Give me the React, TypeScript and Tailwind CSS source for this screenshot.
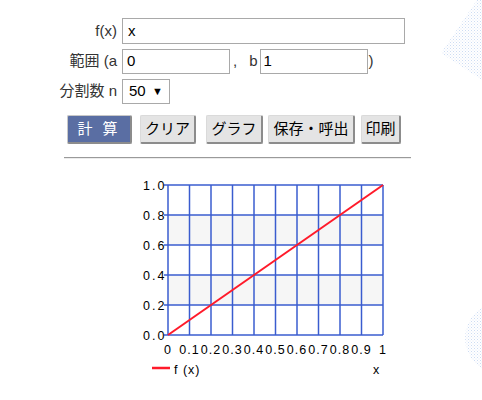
import React from "react";

const xTicks = ["0", "0.1", "0.2", "0.3", "0.4", "0.5", "0.6", "0.7", "0.8", "0.9", "1"];
const yTicks = ["1.0", "0.8", "0.6", "0.4", "0.2", "0.0"];

function Btn({ label, className }: { label: string; className: string }) {
  return (
    <div
      className={`h-[29px] flex items-center justify-center rounded-[2px] border-t border-l border-t-[#dadada] border-l-[#dadada] border-b-2 border-r-2 border-b-[#8c8c8c] border-r-[#8c8c8c] bg-[#e4e4e4] text-[15px] text-black ${className}`}
    >
      {label}
    </div>
  );
}

function Chart() {
  const left = 168;
  const right = 383;
  const top = 186;
  const bottom = 336;
  const colW = (right - left) / 10;
  return (
    <svg width={482} height={240} className="block">
      <g transform="translate(0,-160)">
        <rect x={left} y={216} width={right - left} height={30} fill="#f6f6f6" />
        <rect x={left} y={276} width={right - left} height={30} fill="#f6f6f6" />
        {Array.from({ length: 11 }).map((_, i) => (
          <line key={"v" + i} x1={left + i * colW} x2={left + i * colW} y1={top} y2={bottom} stroke="#3a5ccf" strokeWidth={1.5} />
        ))}
        {Array.from({ length: 6 }).map((_, j) => (
          <line key={"h" + j} x1={164} x2={right} y1={top + j * 30} y2={top + j * 30} stroke="#3a5ccf" strokeWidth={1.5} />
        ))}
        <line x1={left} y1={bottom} x2={right} y2={top} stroke="#ff1a2a" strokeWidth={2} />
        {yTicks.map((t, j) => (
          <text key={t} x={143} y={top + j * 30 + 5} fontSize={12.5} letterSpacing={2} fill="#000" fontFamily="Liberation Sans, sans-serif">
            {t}
          </text>
        ))}
        {xTicks.map((t, i) => (
          <text key={t} x={left + i * colW} y={355} fontSize={12.5} letterSpacing={1} textAnchor="middle" fill="#000" fontFamily="Liberation Sans, sans-serif">
            {t}
          </text>
        ))}
        <line x1={152} x2={170} y1={369} y2={369} stroke="#ff1a2a" strokeWidth={2.5} />
        <text x={174} y={375} fontSize={12.5} letterSpacing={1} fill="#000" fontFamily="Liberation Sans, sans-serif">
          f (x)
        </text>
        <text x={373} y={375} fontSize={12.5} fill="#000" fontFamily="Liberation Sans, sans-serif">
          x
        </text>
      </g>
    </svg>
  );
}

export default function App() {
  return (
    <div className="relative w-[482px] h-[400px] overflow-hidden bg-white font-['Liberation_Sans','Noto_Sans_CJK_JP',sans-serif]">
      {/* background dots */}
      <svg width={482} height={400} className="absolute inset-0 pointer-events-none">
        <defs>
          <pattern id="dots" width={3} height={3} patternUnits="userSpaceOnUse">
            <rect x={0} y={0} width={1} height={1} fill="#cddcf3" />
            <rect x={1.5} y={1.5} width={1} height={1} fill="#dde7f6" />
          </pattern>
        </defs>
        <polygon points="477,0 441,53 482,80 482,0" fill="url(#dots)" />
        <circle cx={501} cy={338} r={36} fill="url(#dots)" />
      </svg>

      <div className="relative pt-[18px]">
        <div className="flex items-center h-[26px]">
          <span className="w-[117px] text-right text-[15px] text-[#333]">f(x)</span>
          <div className="ml-[5px] w-[283px] h-[26px] border border-[#a9a9a9] px-[5px] flex items-center text-[15px] text-black">x</div>
        </div>
        <div className="flex items-center h-[25px] mt-[5px]">
          <span className="w-[117px] text-right text-[15px] text-[#333]">範囲 (a</span>
          <div className="ml-[5px] w-[108px] h-[25px] border border-[#a9a9a9] px-[4px] flex items-center text-[15px] text-black">0</div>
          <span className="ml-[3px] text-[15px] text-[#333]">,</span>
          <span className="ml-[12px] text-[15px] text-[#333]">b</span>
          <div className="ml-[2px] w-[108px] h-[25px] border border-[#a9a9a9] px-[3px] flex items-center text-[15px] text-black">1</div>
          <span className="ml-[1px] text-[15px] text-[#333]">)</span>
        </div>
        <div className="flex items-center h-[25px] mt-[5px]">
          <span className="w-[117px] text-right text-[15px] text-[#333]">分割数 n</span>
          <div className="ml-[5px] w-[48px] h-[25px] border border-[#a9a9a9] pl-[6px] pr-[6px] flex items-center justify-between text-[15px] text-black">
            <span>50</span>
            <span className="text-[11px]">▼</span>
          </div>
        </div>

        <div className="flex items-center mt-[11px] ml-[67px]">
          <div className="w-[65px] h-[29px] flex items-center justify-center rounded-[2px] border-t border-l border-t-[#c8c8c8] border-l-[#c8c8c8] border-b-2 border-r-2 border-b-[#8c8c8c] border-r-[#8c8c8c] bg-[#5a6ea3] text-[15px] text-white tracking-[3px]">
            計 算
          </div>
          <Btn label="クリア" className="ml-[8px] w-[56px]" />
          <Btn label="グラフ" className="ml-[10px] w-[57px]" />
          <Btn label="保存・呼出" className="ml-[5px] w-[87px]" />
          <Btn label="印刷" className="ml-[6px] w-[40px]" />
        </div>

        <div className="mt-[13px] ml-[64px] w-[347px] h-[2px] border-t border-t-[#9a9a9a] border-b border-b-[#ececec]" />

        <Chart />
      </div>
    </div>
  );
}
